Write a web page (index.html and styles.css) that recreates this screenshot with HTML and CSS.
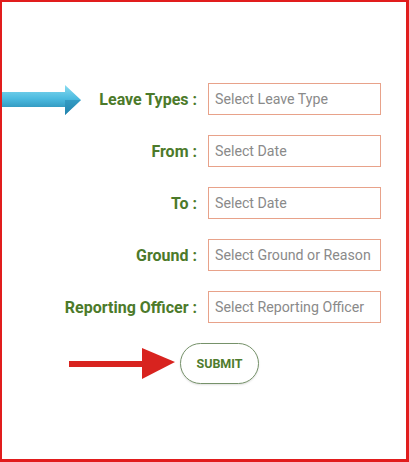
FILE: index.html
```html
<!DOCTYPE html>
<html>
<head>
<meta charset="utf-8">
<link rel="stylesheet" href="styles.css">
</head>
<body>
<div class="frame">
  <svg class="blue-arrow" width="80" height="32" viewBox="0 0 80 32">
    <defs>
      <linearGradient id="bg" x1="0" y1="0" x2="0" y2="1">
        <stop offset="0" stop-color="#8adcf0"/>
        <stop offset="0.45" stop-color="#4cbbe0"/>
        <stop offset="1" stop-color="#1f7fa8"/>
      </linearGradient>
    </defs>
    <polygon points="0,8 63,8 63,1 79,16 63,31 63,23 0,23" fill="url(#bg)"/>
    <polygon points="63,16 79,16 63,31" fill="#2487b0" opacity="0.55"/>
  </svg>
  <form class="form">
    <div class="grid">
      <label class="label">Leave Types :</label>
      <div class="field">Select Leave Type</div>
      <label class="label">From :</label>
      <div class="field">Select Date</div>
      <label class="label">To :</label>
      <div class="field">Select Date</div>
      <label class="label">Ground :</label>
      <div class="field">Select Ground or Reason</div>
      <label class="label">Reporting Officer :</label>
      <div class="field">Select Reporting Officer</div>
    </div>
    <div class="submit-row">
      <svg class="red-arrow" width="107" height="34" viewBox="0 0 107 34">
        <rect x="0" y="14" width="76" height="6" fill="#d8231f"/>
        <polygon points="73,1 106,15 73,32" fill="#d8231f"/>
      </svg>
      <button type="button" class="submit">SUBMIT</button>
    </div>
  </form>
</div>
</body>
</html>
```

FILE: styles.css
```css
html, body {
  margin: 0;
  padding: 0;
  background: #ffffff;
}
.frame {
  position: relative;
  width: 409px;
  height: 462px;
  box-sizing: border-box;
  border-style: solid;
  border-color: #e11d1d;
  border-width: 2px 3px 3px 2px;
  background: #ffffff;
  font-family: Roboto, "Liberation Sans", sans-serif;
  overflow: hidden;
}
.blue-arrow {
  position: absolute;
  left: 0;
  top: 82px;
}
.form {
  margin: 0;
  padding-top: 81px;
}
.grid {
  display: grid;
  grid-template-columns: 195px 173px;
  grid-auto-rows: 32px;
  column-gap: 11px;
  row-gap: 20px;
}
.label {
  display: flex;
  align-items: center;
  justify-content: flex-end;
  font-weight: 700;
  font-size: 16px;
  color: #4c7a2a;
  white-space: nowrap;
}
.field {
  box-sizing: border-box;
  border: 1.5px solid #e8a28a;
  display: flex;
  align-items: center;
  padding-left: 6px;
  font-size: 14.2px;
  color: #8a8a8a;
  white-space: nowrap;
  overflow: hidden;
  background: #fff;
}
.submit-row {
  display: flex;
  align-items: center;
  padding-left: 67px;
  margin-top: 20px;
  gap: 4px;
}
.red-arrow {
  display: block;
}
.submit {
  width: 79px;
  height: 41px;
  box-sizing: border-box;
  border: 1.6px solid #76926a;
  border-radius: 21px;
  background: #fff;
  box-shadow: 0 1px 2px rgba(0,0,0,0.12);
  font-family: Roboto, "Liberation Sans", sans-serif;
  font-weight: 700;
  font-size: 12.5px;
  color: #4f7c2d;
  padding: 0;
}
```
